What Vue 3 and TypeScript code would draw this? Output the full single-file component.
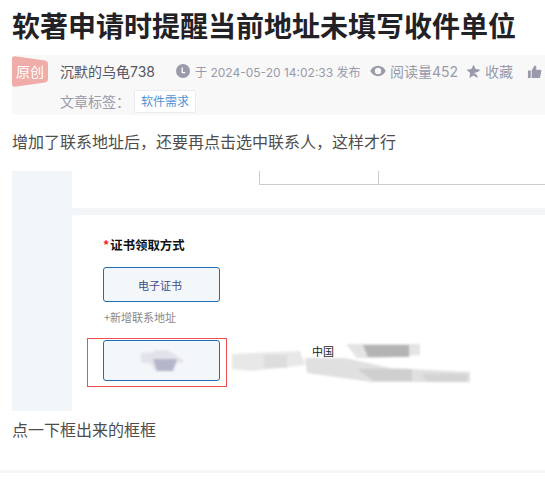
<script setup lang="ts">
const title = '软著申请时提醒当前地址未填写收件单位'
</script>

<template>
  <div class="page">
    <article class="article">
      <h1 class="title">{{ title }}</h1>
      <section class="info">
        <span class="badge">
          <svg class="badge-bg" viewBox="0 0 36 31"><path d="M3 0.3L33 4.5Q36 5 36 8V23Q36 26 33 26.4L3 30.8Q0 31 0 28V3Q0 0 3 0.3Z" fill="#f0aca8" /></svg>
          <span class="badge-text">原创</span>
        </span>
        <div class="info-body">
          <div class="meta">
            <span class="author">沉默的乌龟738</span>
            <span class="item clock-item">
              <svg class="icon" viewBox="0 0 14 14"><circle cx="7" cy="7" r="7" fill="#999aaa" /><path d="M6.2 3.4V8.6H9.2" fill="none" stroke="#fff" stroke-width="1.3" /></svg>
              <span class="time">于 2024-05-20 14:02:33 发布</span>
            </span>
            <span class="item eye-item">
              <svg class="icon-eye" viewBox="0 0 16 12"><path d="M8 0.8C4.6 0.8 1.8 3 0.3 6C1.8 9 4.6 11.2 8 11.2C11.4 11.2 14.2 9 15.7 6C14.2 3 11.4 0.8 8 0.8Z" fill="#999aaa" /><circle cx="8" cy="6" r="3.2" fill="#f8f8f8" /></svg>
              <span>阅读量452</span>
            </span>
            <span class="item star-item">
              <svg class="icon" viewBox="0 0 16 16"><path d="M8 0.8L10.2 5.3L15.4 6L11.6 9.5L12.4 14.8L8 12.2L3.6 14.8L4.4 9.5L0.6 6L5.8 5.3Z" fill="#999aaa" /><path d="M8.6 9.6L16 7.6V9L12.6 12.6Z" fill="#f8f8f8" /></svg>
              <span>收藏</span>
            </span>
            <svg class="thumb" viewBox="0 0 16 16"><path d="M1 7H4V15H1ZM5 7L8 1.5C9.5 1.5 10.2 2.6 10 4L9.6 6H14C15 6 15.5 6.8 15.3 7.6L14 14C13.8 14.7 13.3 15 12.6 15H5Z" fill="#999aaa" /></svg>
          </div>
          <div class="tags">
            <span class="tag-label">文章标签：</span>
            <span class="tag">软件需求</span>
          </div>
        </div>
      </section>

      <p class="para first">增加了联系地址后，还要再点击选中联系人，这样才行</p>

      <figure class="shot">
        <aside class="side"></aside>
        <div class="shot-main">
          <div class="card-top">
            <div class="table-head"><i class="cell"></i><i class="cell last"></i></div>
          </div>
          <div class="card-form">
            <div class="form-title"><b class="req">*</b>证书领取方式</div>
            <div class="choice">电子证书</div>
            <div class="add">+新增联系地址</div>
            <div class="choice selected">
              <svg class="blob" viewBox="0 0 42 22">
                <path d="M0 3L12 2L14 0H26L36 6L42 10V13H36L30 21H14L10 14L0 12Z" fill="#e2e3ea" />
                <path d="M12 9H36L32 21H16Z" fill="#b4b6cb" />
              </svg>
            </div>
          </div>
        </div>
        <span class="addr">中国</span>
        <svg class="smears" viewBox="0 0 533 240">
          <path d="M220 183L240 182L288 180L293 194L240 200L220 198Z" fill="#e8e8e8" />
          <path d="M252 184H275V197H252Z" fill="#dddddd" />
          <path d="M334 173H408V184L365 187H345Z" fill="#e4e4e4" />
          <path d="M351 174H397V186H356Z" fill="#b4b4b4" />
          <path d="M293 187L333 187L378 197L458 201L458 211L360 211L295 202Z" fill="#e0e0e0" />
          <path d="M345 198H400V210H362Z" fill="#cfcfcf" />
          <path d="M410 203H455V211H415Z" fill="#d4d4d4" />
        </svg>
        <span class="frame"></span>
      </figure>

      <p class="para second">点一下框出来的框框</p>
    </article>
    <div class="divider"></div>
  </div>
</template>

<style>
html, body { margin: 0; background: #fff; overflow: hidden; }
</style>

<style scoped>
.page {
  width: 545px;
  height: 486px;
  overflow: hidden;
  font-family: Inter, "Noto Sans CJK SC", sans-serif;
}
.article { padding-left: 12px; }
.title {
  margin: 0;
  height: 55px;
  font-size: 28px;
  line-height: 50px;
  font-weight: 700;
  color: #222226;
  font-family: "Noto Sans CJK SC", sans-serif;
  white-space: nowrap;
  box-sizing: border-box;
}
.info {
  display: flex;
  width: 533px;
  height: 60px;
  background: #f8f8f8;
  border-radius: 4px 0 0 4px;
}
.badge {
  position: relative;
  flex: none;
  width: 36px;
  height: 31px;
  margin-top: 1px;
  color: #fff;
  font-size: 14px;
  line-height: 31px;
  text-align: center;
}
.badge-bg { position: absolute; left: 0; top: 0; width: 36px; height: 31px; }
.badge-text { position: relative; }
.info-body { margin-left: 12px; flex: 1; min-width: 0; }
.meta {
  display: flex;
  align-items: center;
  height: 32px;
  white-space: nowrap;
  color: #999aaa;
  font-size: 14px;
}
.author { width: 116px; color: #555666; font-size: 14px; flex: none; }
.item { display: flex; align-items: center; flex: none; }
.icon { width: 14px; height: 14px; margin-right: 5px; flex: none; }
.icon-eye { width: 16px; height: 12px; margin-right: 4px; flex: none; }
.time { font-size: 12px; width: 175px; }
.eye-item { width: 96px; }
.star-item { width: 61px; }
.star-item .icon { width: 15px; height: 15px; margin-right: 4px; }
.thumb { width: 15px; height: 15px; flex: none; }
.tags { display: flex; align-items: center; height: 28px; }
.tag-label { width: 74px; color: #999aaa; font-size: 14px; flex: none; }
.tag {
  box-sizing: border-box;
  width: 62px;
  height: 23px;
  border: 1px solid #eaeaef;
  border-radius: 2px;
  background: #fff;
  color: #5094d5;
  font-size: 12px;
  line-height: 21px;
  text-align: center;
}
.para {
  margin: 0;
  font-size: 16px;
  line-height: 24px;
  color: #4d4d4d;
  white-space: nowrap;
}
.para.first { margin-top: 15px; }
.para.second { margin-top: 7px; }
.shot {
  position: relative;
  display: flex;
  width: 533px;
  height: 240px;
  margin: 17px 0 0;
  background: #f3f6f9;
}
.side { width: 60px; flex: none; }
.shot-main { flex: 1; display: flex; flex-direction: column; gap: 7px; }
.card-top {
  height: 37px;
  background: #fff;
  border-radius: 0 0 0 3px;
  padding-left: 187px;
}
.table-head { display: flex; height: 14px; border-bottom: 1px solid #ccc; box-sizing: border-box; }
.cell { width: 119px; border-left: 1px solid #ccc; box-sizing: border-box; }
.cell.last { flex: 1; }
.card-form {
  flex: 1;
  background: #fff;
  border-radius: 3px 0 0 0;
  padding-left: 31px;
  font-family: "Noto Sans CJK SC", sans-serif;
}
.form-title {
  margin-top: 21px;
  height: 18px;
  font-size: 12.4px;
  line-height: 18px;
  font-weight: 700;
  color: #111;
}
.req { color: #f02020; margin-right: 1px; font-weight: 700; }
.choice {
  display: flex;
  align-items: center;
  justify-content: center;
  box-sizing: border-box;
  width: 117px;
  height: 35px;
  margin-top: 13px;
  padding-right: 3px;
  border: 1px solid #1f6db5;
  border-radius: 3px;
  background: #f4f7f9;
  color: #3f4a8c;
  font-size: 11px;
}
.choice.selected { height: 41px; margin-top: 15px; padding-right: 0; }
.blob { width: 42px; height: 22px; filter: blur(1px); }
.add {
  margin-top: 7px;
  height: 16px;
  font-size: 11px;
  line-height: 16px;
  color: #888;
  padding-left: 1px;
}
.smears {
  position: absolute;
  left: 0;
  top: 0;
  width: 533px;
  height: 240px;
  pointer-events: none;
  filter: blur(1px);
}
.addr {
  position: absolute;
  left: 300px;
  top: 172px;
  font-family: "Noto Sans CJK SC", sans-serif;
  font-size: 11px;
  line-height: 16px;
  color: #222;
}
.frame {
  position: absolute;
  left: 75px;
  top: 167px;
  width: 138px;
  height: 47px;
  border: 1px solid #f25050;
}
.divider {
  height: 3px;
  margin-top: 28px;
  background: #f5f6f7;
}
</style>
